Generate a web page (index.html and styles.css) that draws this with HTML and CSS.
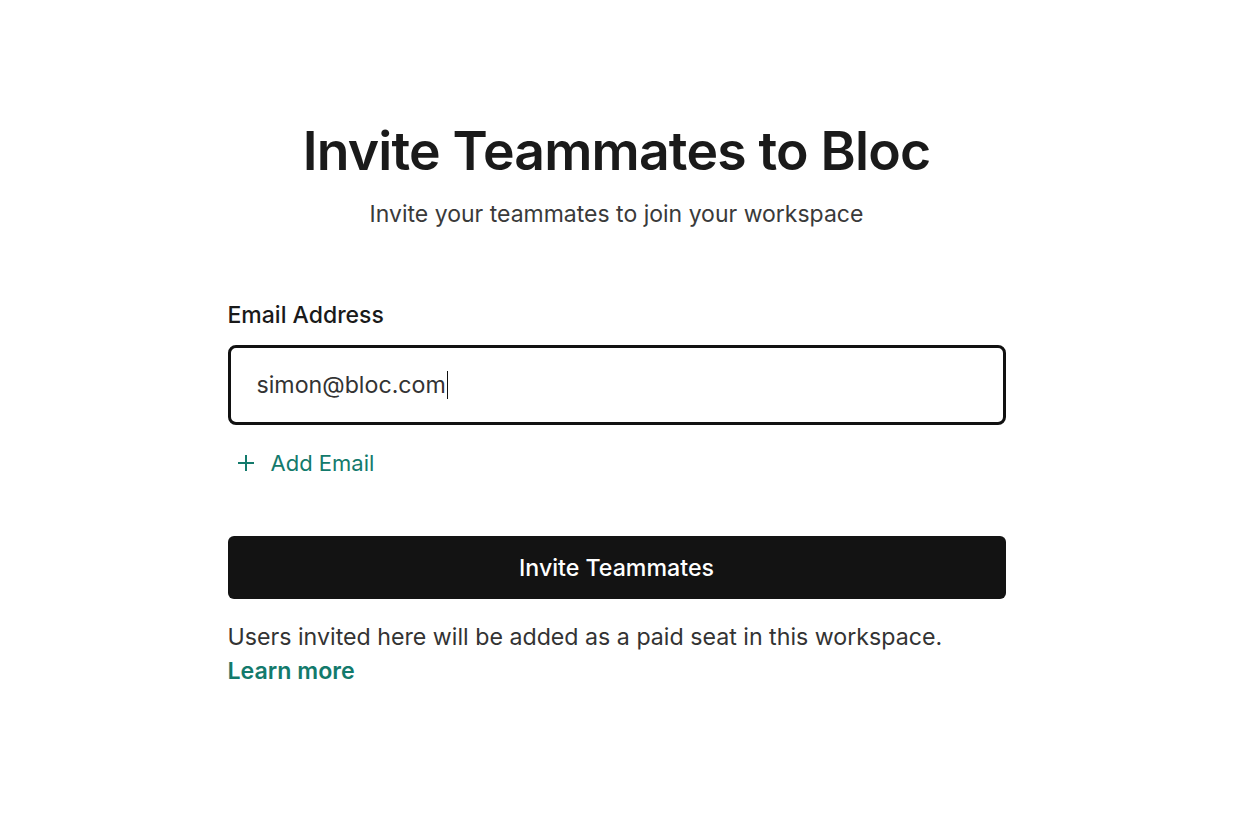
FILE: index.html
```html
<!DOCTYPE html>
<html lang="en">
<head>
<meta charset="utf-8">
<title>Invite Teammates to Bloc</title>
<link rel="stylesheet" href="styles.css">
</head>
<body>
<main class="page">
  <header class="intro">
    <h1 class="title">Invite Teammates to Bloc</h1>
    <p class="subtitle">Invite your teammates to join your workspace</p>
  </header>
  <form class="form">
    <label class="label" for="email">Email Address</label>
    <div class="input">
      <span class="input-text">simon@bloc.com</span><span class="caret"></span>
    </div>
    <button type="button" class="add">
      <svg class="add-icon" width="20" height="20" viewBox="0 0 20 20" aria-hidden="true">
        <path d="M10 2v16M2 10h16" stroke="currentColor" stroke-width="2" fill="none"/>
      </svg>
      <span>Add Email</span>
    </button>
    <button type="button" class="submit">Invite Teammates</button>
    <p class="note">Users invited here will be added as a paid seat in this workspace.<br><a class="learn" href="#">Learn more</a></p>
  </form>
</main>
</body>
</html>
```
FILE: styles.css
```css
* { box-sizing: border-box; }
html, body { margin: 0; padding: 0; background: #ffffff; }
body { font-family: Inter, "Noto Sans", sans-serif; color: #1a1a1a; }
.page {
  width: 778px;
  margin: 0 auto;
  padding-top: 117px;
  display: flex;
  flex-direction: column;
}
.intro { text-align: center; }
.title {
  margin: 0;
  font-size: 53.5px;
  font-weight: 600;
  letter-spacing: -0.8px;
  line-height: 68px;
  color: #1a1a1a;
}
.subtitle {
  margin: 14px 0 0;
  font-size: 23px;
  line-height: 30px;
  color: #3a3a3a;
}
.form {
  display: flex;
  flex-direction: column;
  margin-top: 71px;
}
.label {
  font-size: 23px;
  font-weight: 500;
  line-height: 30px;
  color: #1a1a1a;
}
.input {
  margin-top: 15px;
  height: 80px;
  border: 3px solid #111111;
  border-radius: 8px;
  display: flex;
  align-items: center;
  padding-left: 26px;
  font-size: 23.2px;
  color: #333333;
}
.caret {
  display: inline-block;
  width: 1.5px;
  height: 28px;
  background: #111;
  margin-left: 1px;
}
.add {
  margin-top: 21px;
  align-self: flex-start;
  display: flex;
  align-items: center;
  gap: 15px;
  padding: 0 0 0 8px;
  border: 0;
  background: none;
  font-family: inherit;
  font-size: 22px;
  line-height: 34px;
  color: #137a6c;
  cursor: pointer;
}
.add-icon { display: block; }
.submit {
  margin-top: 56px;
  height: 63px;
  border: 0;
  border-radius: 6px;
  background: #131313;
  color: #ffffff;
  font-family: inherit;
  font-size: 23.2px;
  font-weight: 500;
  cursor: pointer;
}
.note {
  margin: 21px 0 0;
  font-size: 23.2px;
  line-height: 34px;
  color: #333333;
}
.learn {
  color: #137a6c;
  font-weight: 600;
  text-decoration: none;
}
```
